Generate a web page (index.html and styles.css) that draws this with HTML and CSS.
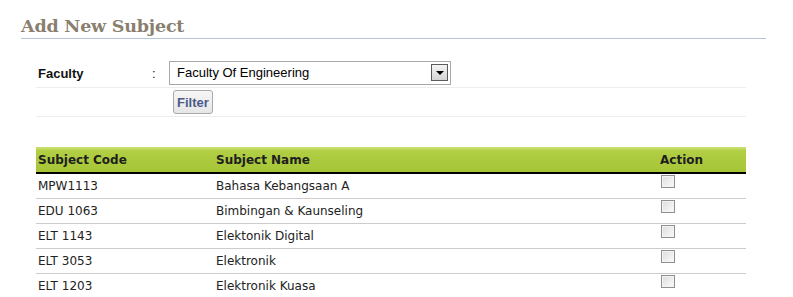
FILE: index.html
```html
<!DOCTYPE html>
<html lang="en">
<head>
  <meta charset="UTF-8">
  <title>Add New Subject</title>
  <link rel="stylesheet" href="styles.css">
</head>
<body>
  <div class="page">
    <h2 class="title">Add New Subject</h2>

    <div class="content">
      <form class="filter-form">
        <div class="form-row">
          <label class="form-label">Faculty</label>
          <span class="colon">:</span>
          <div class="select-wrap">
            <select class="faculty-select">
              <option>Faculty Of Engineering</option>
            </select>
            <span class="select-arrow"></span>
          </div>
        </div>
        <div class="form-row">
          <span class="form-label"></span>
          <span class="colon"></span>
          <button type="button" class="filter-btn">Filter</button>
        </div>
      </form>

      <table class="subjects">
        <thead>
          <tr>
            <th class="col-code">Subject Code</th>
            <th class="col-name">Subject Name</th>
            <th class="col-action">Action</th>
          </tr>
        </thead>
        <tbody>
          <tr><td>MPW1113</td><td>Bahasa Kebangsaan A</td><td><input type="checkbox" class="check"></td></tr>
          <tr><td>EDU 1063</td><td>Bimbingan &amp; Kaunseling</td><td><input type="checkbox" class="check"></td></tr>
          <tr><td>ELT 1143</td><td>Elektonik Digital</td><td><input type="checkbox" class="check"></td></tr>
          <tr><td>ELT 3053</td><td>Elektronik</td><td><input type="checkbox" class="check"></td></tr>
          <tr><td>ELT 1203</td><td>Elektronik Kuasa</td><td><input type="checkbox" class="check"></td></tr>
        </tbody>
      </table>
    </div>
  </div>
</body>
</html>
```

FILE: styles.css
```css
body {
  margin: 0;
  padding: 0;
  background: #fff;
  font-family: "DejaVu Sans", Verdana, sans-serif;
  color: #222;
}

.page {
  padding: 14px 0 0 21px;
  width: 745px;
}

.title {
  margin: 0;
  height: 24px;
  border-bottom: 1px solid #b5c6d8;
  font-family: "DejaVu Serif", Georgia, serif;
  font-size: 17.5px;
  font-weight: bold;
  line-height: 24px;
  letter-spacing: -0.2px;
  color: #8a7f6f;
}

.content {
  margin-left: 15px;
  width: 710px;
}

.filter-form {
  margin-top: 21px;
}

.form-row {
  display: flex;
  align-items: center;
  border-bottom: 1px solid #eeeeee;
}

.form-row:first-child {
  height: 27px;
}

.form-row:last-child {
  height: 28px;
}

.form-label {
  width: 114px;
  padding-left: 2px;
  font-family: "Liberation Sans", Arial, sans-serif;
  font-size: 13px;
  font-weight: bold;
  color: #111;
}

.colon {
  width: 17px;
  font-family: "Liberation Sans", Arial, sans-serif;
  font-size: 13px;
  color: #111;
}

.select-wrap {
  position: relative;
  width: 282px;
  height: 24px;
  margin-top: -2px;
}

.faculty-select {
  appearance: none;
  -webkit-appearance: none;
  width: 100%;
  height: 100%;
  margin: 0;
  padding: 0 0 0 7px;
  border: 1px solid #a8a8a8;
  border-radius: 0;
  background: #fff;
  font-family: "Liberation Sans", Arial, sans-serif;
  font-size: 13px;
  color: #000;
}

.select-arrow {
  position: absolute;
  top: 3px;
  right: 3px;
  width: 15px;
  height: 15px;
  border: 1px solid #5a5a5a;
  background: linear-gradient(#f4f4f4, #d4d4d4);
  pointer-events: none;
}

.select-arrow::after {
  content: "";
  position: absolute;
  left: 4px;
  top: 6px;
  border-left: 4px solid transparent;
  border-right: 4px solid transparent;
  border-top: 4px solid #000;
}

.filter-btn {
  margin-left: 4px;
  height: 24px;
  padding: 0 3px;
  border: 1px solid #aaa;
  border-radius: 3px;
  background: linear-gradient(#f6f6f6, #e6e6e6);
  font-family: "Liberation Sans", Arial, sans-serif;
  font-size: 13px;
  font-weight: bold;
  color: #4a5a8a;
}

.subjects {
  margin-top: 30px;
  width: 710px;
  border-collapse: collapse;
  font-size: 12px;
}

.subjects th {
  height: 24px;
  padding: 1px 2px 0 2px;
  line-height: 16px;
  text-align: left;
  font-size: 12px;
  font-weight: bold;
  color: #1e1e1e;
  background: linear-gradient(#c4dc68 0, #c4dc68 2px, #b2cf45 3px, #a6c536 100%);
  border-bottom: 2px solid #000;
}

.subjects td {
  height: 23px;
  padding: 0 2px;
  line-height: 16px;
  border-bottom: 1px solid #cccccc;
  vertical-align: middle;
  color: #222;
}

.subjects tr:last-child td {
  border-bottom: none;
}

.col-code {
  width: 174px;
}

.col-name {
  width: 440px;
}

.subjects td:last-child {
  vertical-align: top;
  padding-top: 1px;
}

.check {
  display: block;
  appearance: none;
  -webkit-appearance: none;
  box-sizing: border-box;
  width: 14px;
  height: 13px;
  margin: 0 0 0 1px;
  border: 1px solid #8f8f8f;
  background: linear-gradient(135deg, #dcdcdc, #fbfbfb);
  box-shadow: inset 0 0 0 1px #f4f4f4;
}
```
